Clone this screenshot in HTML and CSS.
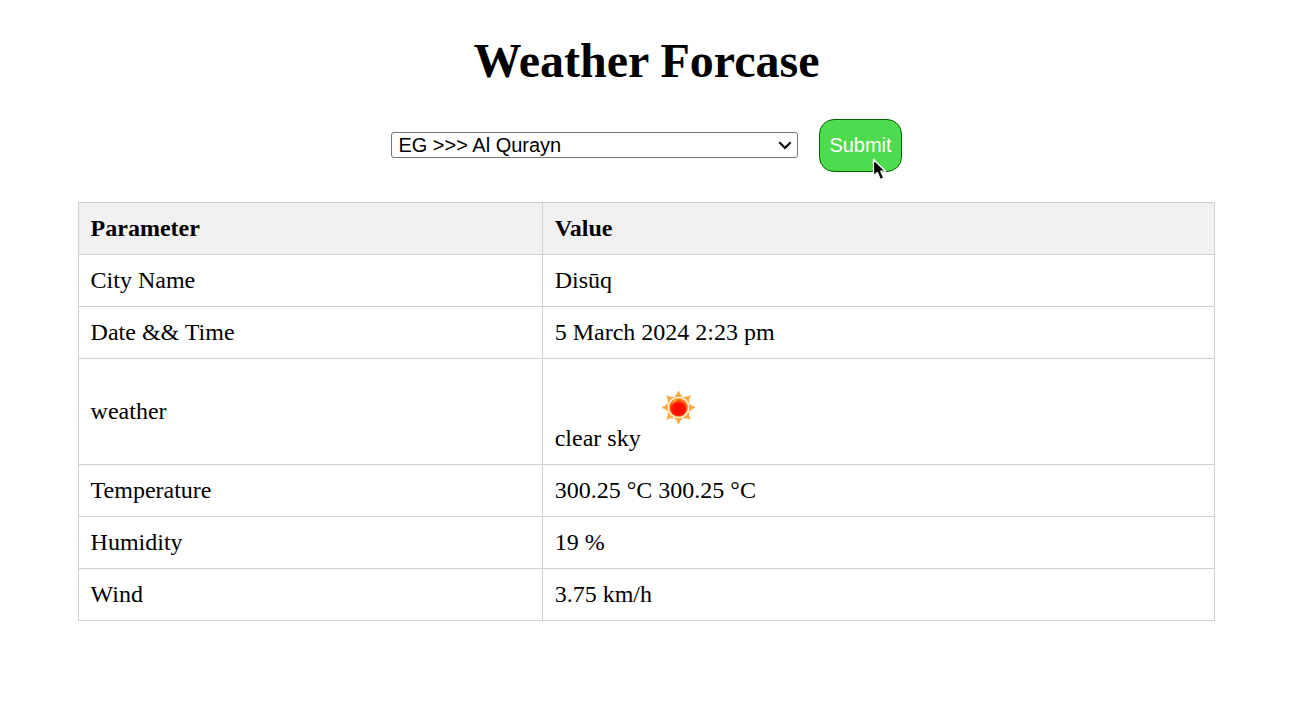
FILE: index.html
```html
<!DOCTYPE html>
<html lang="en">
<head>
  <meta charset="UTF-8">
  <meta name="viewport" content="width=device-width, initial-scale=1">
  <title>Weather Forcase</title>
  <link rel="stylesheet" href="styles.css">
</head>
<body>
  <h1 class="title">Weather Forcase</h1>

  <form class="controls">
    <div class="picker">
      <select class="city" aria-label="City">
        <option selected>EG &gt;&gt;&gt; Al Qurayn</option>
      </select>
      <svg class="arrow" viewBox="0 0 14 9" aria-hidden="true">
        <path d="M1.3 1.3L7 7L12.7 1.3" fill="none" stroke="#000" stroke-width="2.2"/>
      </svg>
    </div>
    <button class="submit" type="button">Submit
      <svg class="pointer" viewBox="0 0 16 24" aria-hidden="true">
        <path d="M1.5 1.5V18L5.3 14.6L8.3 21.5L11.7 20L8.8 13.2H13.5Z" fill="#000" stroke="#fff" stroke-width="1.3" stroke-linejoin="round"/>
      </svg>
    </button>
  </form>

  <table class="report">
    <thead>
      <tr><th>Parameter</th><th>Value</th></tr>
    </thead>
    <tbody>
      <tr><td>City Name</td><td>Disūq</td></tr>
      <tr><td>Date &amp;&amp; Time</td><td>5 March 2024 2:23 pm</td></tr>
      <tr>
        <td>weather</td>
        <td>clear sky<svg class="weather-icon" viewBox="0 0 75 75" role="img" aria-label="Sun">
          <defs>
            <radialGradient id="sun" cx=".5" cy=".6" r=".6">
              <stop offset="0" stop-color="#ff0500"/>
              <stop offset=".55" stop-color="#fd1508"/>
              <stop offset=".8" stop-color="#ff5a14"/>
              <stop offset="1" stop-color="#ffa51e"/>
            </radialGradient>
            <path id="ray" d="M33.8 25.8Q36.6 23.5 37.5 20Q38.4 23.5 41.2 25.8Q37.5 24.6 33.8 25.8Z"/>
          </defs>
          <g fill="#f9a53a" stroke="#fbab48" stroke-width="1" stroke-linejoin="round">
            <use href="#ray"/>
            <use href="#ray" transform="rotate(45 37.5 36.5)"/>
            <use href="#ray" transform="rotate(90 37.5 36.5)"/>
            <use href="#ray" transform="rotate(135 37.5 36.5)"/>
            <use href="#ray" transform="rotate(180 37.5 36.5)"/>
            <use href="#ray" transform="rotate(225 37.5 36.5)"/>
            <use href="#ray" transform="rotate(270 37.5 36.5)"/>
            <use href="#ray" transform="rotate(315 37.5 36.5)"/>
          </g>
          <circle cx="37.5" cy="36.5" r="9.3" fill="url(#sun)" stroke="#ffb02e" stroke-width="1"/>
          <path d="M31.5 32.5Q33 29.5 36 29" fill="none" stroke="#ffd04d" stroke-width="1"/>
        </svg></td>
      </tr>
      <tr><td>Temperature</td><td>300.25 °C 300.25 °C</td></tr>
      <tr><td>Humidity</td><td>19 %</td></tr>
      <tr><td>Wind</td><td>3.75 km/h</td></tr>
    </tbody>
  </table>
</body>
</html>
```

FILE: styles.css
```css
body {
  margin: 0;
  background: #fff;
  color: #000;
  font-family: "Liberation Serif", "Times New Roman", serif;
  font-size: 24px;
}

.title {
  margin: 33px 0 31px;
  font-size: 48px;
  line-height: 55px;
  text-align: center;
}

.controls {
  display: flex;
  justify-content: center;
  align-items: center;
  gap: 21px;
  margin-bottom: 30px;
}

.picker {
  position: relative;
  display: flex;
  padding-bottom: 1px;
}

.city {
  appearance: none;
  width: 407px;
  height: 26px;
  padding: 0 24px 0 6px;
  border: 1px solid #767676;
  border-radius: 3px;
  background: #fff;
  color: #000;
  font-family: "Liberation Sans", Arial, sans-serif;
  font-size: 20px;
}

.arrow {
  position: absolute;
  right: 6px;
  top: 9px;
  width: 14px;
  height: 9px;
  pointer-events: none;
}

.submit {
  position: relative;
  padding: 14px 9px;
  border: 1px solid #006400;
  border-radius: 15px;
  background: #4fdb4f;
  color: #fff;
  font-family: "Liberation Sans", Arial, sans-serif;
  font-size: 20px;
}

.pointer {
  position: absolute;
  left: 52px;
  top: 38px;
  width: 16px;
  height: 24px;
}

.report {
  width: 88%;
  margin: 0 auto;
  border-collapse: collapse;
}

.report th,
.report td {
  padding: 12px;
  border: 1px solid #d0d0d0;
  text-align: left;
}

.report th {
  background: #f1f1f1;
}

.weather-icon {
  width: 75px;
  height: 75px;
}
```
